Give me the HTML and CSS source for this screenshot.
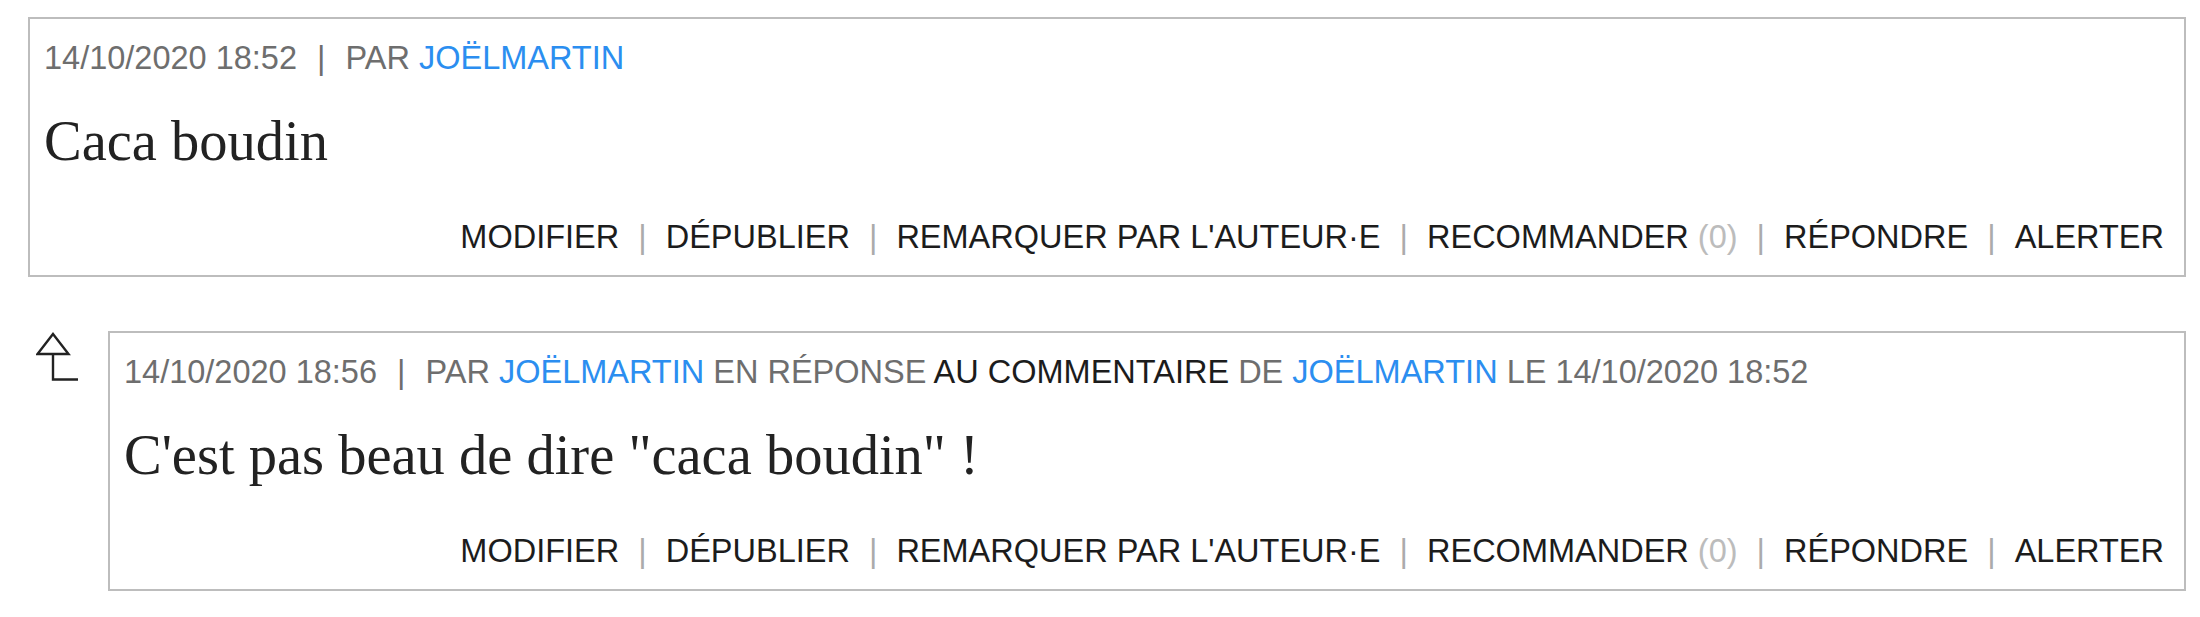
FILE: index.html
```html
<!DOCTYPE html>
<html lang="fr">
<head>
  <meta charset="UTF-8">
  <title>Commentaires</title>
  <link rel="stylesheet" href="styles.css">
</head>
<body>
<div class="thread">
  <article class="comment">
    <div class="comment-meta">
      <span class="date">14/10/2020 18:52</span><span class="sep">|</span>PAR <a class="author" href="#">JOËLMARTIN</a>
    </div>
    <p class="comment-body">Caca boudin</p>
    <ul class="comment-actions">
      <li>MODIFIER</li>
      <li>DÉPUBLIER</li>
      <li>REMARQUER PAR L'AUTEUR·E</li>
      <li>RECOMMANDER <span class="count">(0)</span></li>
      <li>RÉPONDRE</li>
      <li>ALERTER</li>
    </ul>
  </article>

  <div class="reply">
    <div class="reply-icon">
      <svg width="44" height="50" viewBox="0 0 44 50">
        <path d="M17 2 L32.5 22 L1.5 22 Z" fill="none" stroke="#222" stroke-width="2.4" stroke-linejoin="miter"/>
        <path d="M17 22 L17 47.5 L42 47.5" fill="none" stroke="#222" stroke-width="2.4"/>
      </svg>
    </div>
    <article class="comment">
      <div class="comment-meta">
        <span class="date">14/10/2020 18:56</span><span class="sep">|</span>PAR <a class="author" href="#">JOËLMARTIN</a> EN RÉPONSE <a class="parent" href="#">AU COMMENTAIRE</a> DE <a class="author" href="#">JOËLMARTIN</a> LE 14/10/2020 18:52
      </div>
      <p class="comment-body">C'est pas beau de dire "caca boudin" !</p>
      <ul class="comment-actions">
        <li>MODIFIER</li>
        <li>DÉPUBLIER</li>
        <li>REMARQUER PAR L'AUTEUR·E</li>
        <li>RECOMMANDER <span class="count">(0)</span></li>
        <li>RÉPONDRE</li>
        <li>ALERTER</li>
      </ul>
    </article>
  </div>
</div>
</body>
</html>
```

FILE: styles.css
```css
body {
  margin: 0;
  background: #fff;
  font-family: 'Liberation Sans', Arial, sans-serif;
}
.thread {
  padding: 17px 14px 0 28px;
}
.comment {
  flex: 1;
  border: 2px solid #bdbdbd;
  padding: 19px 20px 18px 14px;
}
.comment-meta {
  font-size: 32.5px;
  line-height: 40px;
  color: #6e6e6e;
  white-space: nowrap;
}
.comment-meta a {
  text-decoration: none;
}
.author {
  color: #2b8ef0;
}
.parent {
  color: #1c1c1c;
}
.sep {
  margin: 0 20px;
  color: #6e6e6e;
}
.comment-body {
  margin: 28px 0 41px;
  font-family: 'Liberation Serif', 'Times New Roman', serif;
  font-size: 56.5px;
  line-height: 70px;
  color: #222;
}
.comment-actions {
  list-style: none;
  margin: 0;
  padding: 0;
  display: flex;
  justify-content: flex-end;
  font-size: 32.5px;
  line-height: 40px;
  color: #1c1c1c;
  white-space: nowrap;
}
.comment-actions li + li::before {
  content: "|";
  margin: 0 19px;
  color: #ababab;
}
.count {
  color: #bcbcbc;
}
.reply {
  display: flex;
  margin-top: 54px;
}
.reply-icon {
  width: 80px;
  flex-shrink: 0;
  padding: 1px 0 0 8px;
  box-sizing: border-box;
}
.reply-icon svg {
  display: block;
}
```
